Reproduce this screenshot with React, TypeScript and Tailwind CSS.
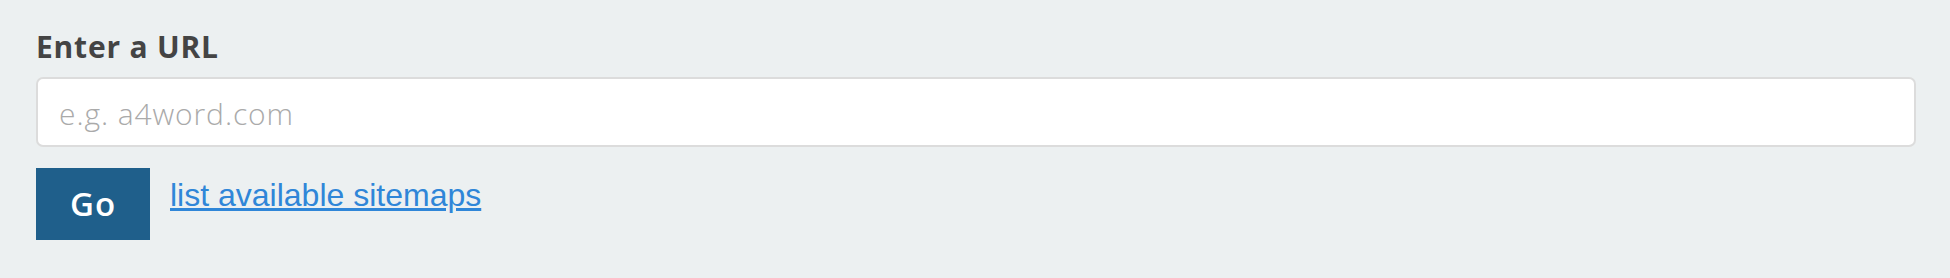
import React from "react";

export default function App() {
  return (
    <div className="w-full h-[278px] bg-[#ecf0f1] pl-[36px] pr-[34px] pt-[27px]">
      <div className="text-[30px] leading-[40px] font-bold tracking-[0.8px] text-[#444444] font-['Open_Sans',sans-serif]">
        Enter a URL
      </div>
      <input
        type="text"
        placeholder="e.g. a4word.com"
        className="mt-[10px] block w-full h-[70px] bg-white border-2 border-[#dcdcdc] rounded-[7px] pl-[21px] pr-[21px] pt-[2px] text-[30px] font-light tracking-[0.9px] text-[#444444] placeholder:text-[#aaaaaa] font-['Open_Sans',sans-serif] outline-none"
      />
      <div className="mt-[21px] flex items-start">
        <button className="w-[114px] h-[72px] bg-[#1f5f8b] text-white text-[33px] font-semibold tracking-[1px] font-['Open_Sans',sans-serif] flex items-center justify-center">
          Go
        </button>
        <a
          href="#"
          className="ml-[20px] mt-[9px] text-[32px] leading-[37px] text-[#2f86d8] underline font-['Liberation_Sans',Arial,sans-serif]"
        >
          list available sitemaps
        </a>
      </div>
    </div>
  );
}
